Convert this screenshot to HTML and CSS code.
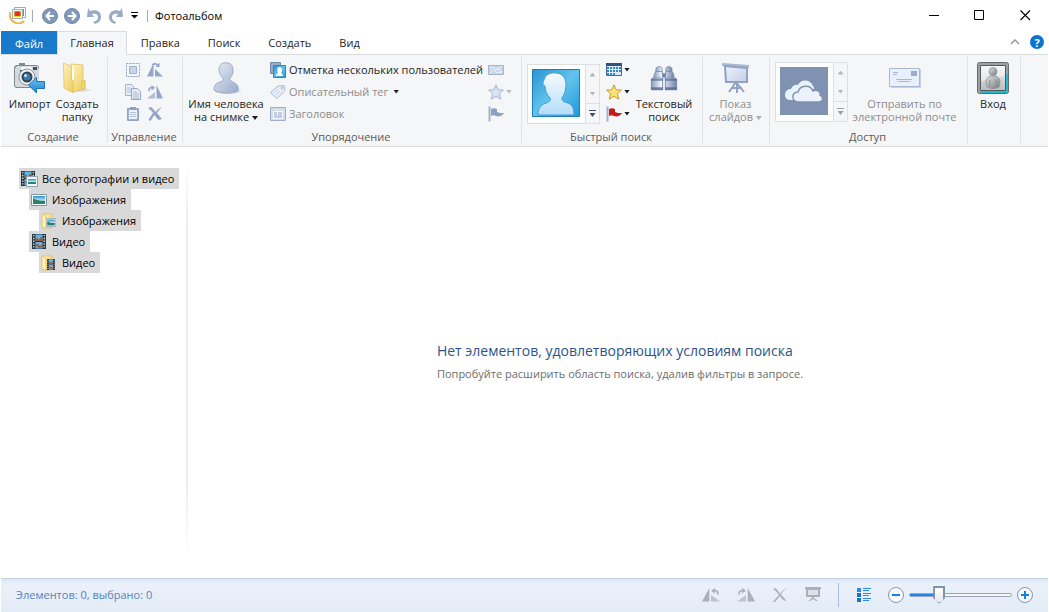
FILE: index.html
```html
<!DOCTYPE html>
<html lang="ru">
<head>
<meta charset="utf-8">
<title>Фотоальбом</title>
<link rel="stylesheet" href="styles.css">
</head>
<body>
<svg class="defs" aria-hidden="true">
  <defs>
    <linearGradient id="gSteel" x1="0" y1="0" x2="1" y2="1"><stop offset="0" stop-color="#e6ecf5"/><stop offset="1" stop-color="#98abc9"/></linearGradient>
    <linearGradient id="gPale" x1="0" y1="0" x2="1" y2="1"><stop offset="0" stop-color="#edf2fa"/><stop offset="1" stop-color="#c3d0e6"/></linearGradient>
    <linearGradient id="gFolder" x1="0" y1="0" x2="1" y2="1"><stop offset="0" stop-color="#fff3b8"/><stop offset="1" stop-color="#eccb5c"/></linearGradient>
    <linearGradient id="gSky" x1="0" y1="0" x2="1" y2="1"><stop offset="0" stop-color="#2a94d4"/><stop offset=".5" stop-color="#62c3ec"/><stop offset="1" stop-color="#1d98dc"/></linearGradient>
    <linearGradient id="gPerson" x1="0" y1="0" x2="0" y2="1"><stop offset="0" stop-color="#f6fbff"/><stop offset="1" stop-color="#b4dcf8"/></linearGradient>
    <linearGradient id="gArrow" x1="0" y1="0" x2="0" y2="1"><stop offset="0" stop-color="#6cc4f4"/><stop offset="1" stop-color="#1c83cf"/></linearGradient>
    <linearGradient id="gBino" x1="0" y1="0" x2="1" y2="0"><stop offset="0" stop-color="#8b9dbd"/><stop offset=".4" stop-color="#f4f7fc"/><stop offset="1" stop-color="#7085ac"/></linearGradient>
    <linearGradient id="gGray" x1="0" y1="0" x2="0" y2="1"><stop offset="0" stop-color="#f0f0f0"/><stop offset="1" stop-color="#b9bdc0"/></linearGradient>
    <linearGradient id="gBody" x1="0" y1="0" x2="1" y2="1"><stop offset="0" stop-color="#dfe1e3"/><stop offset="1" stop-color="#777d82"/></linearGradient>
    <linearGradient id="gPhoto" x1="0" y1="0" x2="0" y2="1"><stop offset="0" stop-color="#2d8fd0"/><stop offset=".55" stop-color="#bfe8ee"/><stop offset=".6" stop-color="#2d8a56"/><stop offset="1" stop-color="#2a75a8"/></linearGradient>
    <symbol id="person" viewBox="0 0 48 48"><path d="M6 46c0-6 2-10 8-12 4-1 5-3 4-5-3-3-5-7-5-12-3-1-2-4-1-6 1-5 6-8 12-7 6 0 10 5 10 11 0 5-1 10-4 14 0 4 3 4 6 5 5 2 6 6 6 12z"/></symbol>
    <symbol id="star" viewBox="0 0 16 16"><path d="M8 .8l2.1 4.900 5.300.4-4 3.600 1.300 5.500L8 12.300l-4.700 2.900L4.600 9.700.6 6.100l5.300-.4z" stroke-linejoin="round"/></symbol>
    <symbol id="flag" viewBox="0 0 16 16"><path class="pole" d="M.5.500h2v15h-2z"/><path d="M3 3c2-1 4-1 6 0v3c2 1 4 1 7 1-2 3-5 4-8 3-2-1-3-1-5 0z"/></symbol>
    <symbol id="turn" viewBox="0 0 16 16"><path d="M0 14.500L6.500 1v13.500z"/><path d="M8 8l8 6.500H8z" fill-opacity=".7"/><path d="M14 7.500C14.500 4.500 13 3.500 11 3.500" fill="none" stroke="currentColor" stroke-width="1.500"/><path d="M11.500 1v5.500L8 3.700z"/></symbol>
    <symbol id="turnUp" viewBox="0 0 16 16"><path d="M0 14.500L6.500 1v13.500zM8 7l8 7.500H8z"/><path d="M5 3c2-1.500 4-1.500 6 0" fill="none" stroke="currentColor" stroke-width="1.500"/><path d="M12.500.5V5H8.500z"/></symbol>
    <symbol id="cross" viewBox="0 0 16 16"><path d="M1 2l3-1c2 1 3 3 4.500 5C10 4 12 2 15 1c-2 2-4 4-5 6 2 2 3 4 5 6l-3 1c-2-1-3-3-4.500-5C6 11 5 13 3.500 15L1.500 14C3 11 4.500 9 6 7 4.500 5 3 3.500 1 2z"/></symbol>
    <symbol id="film" viewBox="0 0 16 16" preserveAspectRatio="none"><path fill="#27343d" d="M0 0h16v16H0z"/><path fill="#5fb8e6" d="M4 .5h8v7H4zM4 8.500h8v7H4z"/><path fill="#a4593f" d="M4 5l2-1 2 2 2-3 2 1v3.500H4zM4 12l3-2 2 3 3-2v3l-4 1z"/><path d="M2 1v14M14 1v14" stroke="#dfe7eb" stroke-width="1.500" stroke-dasharray="1.500 1.500"/></symbol>
    <symbol id="photo" viewBox="0 0 16 12" preserveAspectRatio="none"><path fill="#fff" stroke="#7f96a8" d="M.5.5h15v11H.5z"/><path fill="url(#gPhoto)" d="M2 2h12v8H2z"/><path fill="#357f4d" d="M2 5c3 0 4 2 12 2v1H2z"/></symbol>
    <symbol id="folder16" viewBox="0 0 16 16"><path fill="url(#gFolder)" stroke="#d9bd6b" stroke-width=".7" d="M2 1h9v14H2z"/><path fill="#fff0af" stroke="#d9bd6b" stroke-width=".7" d="M1 1l4 2v12.500L1 14z"/></symbol>
  </defs>
</svg>

<header class="titlebar">
  <svg class="app-icon" width="17" height="17" viewBox="0 0 17 17"><path d="M1 5c-1 5 1 9 6 11 3 1 6 0 8-2" fill="none" stroke="#f4b545" stroke-width="2"/><path fill="#fff" stroke="#8fb0cb" d="M5.500.5h11v10h-11z"/><path fill="#4c9ed6" d="M12 2h3v7h-3z"/><path fill="#fff" stroke="#8fb0cb" d="M3.500 2.500h10v9h-10z"/><path fill="#f5852a" d="M5 4h7v6H5z"/><circle cx="8.500" cy="7" r="2.500" fill="#d9341a"/><path d="M5 9h7v1H5z" fill="#ffd02e"/></svg>
  <span class="bar"></span>
  <div class="quick">
    <button aria-label="Назад"><svg width="16" height="16" viewBox="0 0 16 16"><circle cx="8" cy="8" r="7.500" fill="#8398bd" stroke="#71869f"/><path d="M12 8H5M8 4L4.500 8 8 12" fill="none" stroke="#fff" stroke-width="2"/></svg></button>
    <button aria-label="Вперёд"><svg width="16" height="16" viewBox="0 0 16 16"><circle cx="8" cy="8" r="7.500" fill="#8398bd" stroke="#71869f"/><path d="M4 8h7M8 4l3.500 4L8 12" fill="none" stroke="#fff" stroke-width="2"/></svg></button>
    <button aria-label="Отменить"><svg width="16" height="16" viewBox="0 0 16 16"><path fill="#9aabc8" d="M2 0l2 3c6-2 11 0 11 6 0 4-3 6-6 7l-2-2c3-1 5-2 5-5 0-3-3-4-6-3l2 3H1z"/></svg></button>
    <button aria-label="Повторить"><svg width="16" height="16" viewBox="0 0 16 16"><path fill="#9aabc8" d="M14 0l-2 3C6 1 1 4 1 9c0 4 3 6 6 7l1-2c-2-1-4-2-4-5s3-4 6-3L8 9h7z"/></svg></button>
    <button class="narrow" aria-label="Настройка панели"><svg width="7" height="7" viewBox="0 0 7 7"><path d="M0 0h7v1H0zM0 3h7L3.500 6.500z"/></svg></button>
  </div>
  <span class="bar"></span>
  <h1 class="title">Фотоальбом</h1>
  <div class="window-buttons">
    <button aria-label="Свернуть"><svg width="11" height="11" viewBox="0 0 11 11"><path d="M1 5h10v1H1z"/></svg></button>
    <button aria-label="Развернуть"><svg width="11" height="11" viewBox="0 0 11 11"><path d="M.5.5h9v9h-9z" fill="none" stroke="#000"/></svg></button>
    <button aria-label="Закрыть"><svg width="11" height="11" viewBox="0 0 11 11"><path d="M.5.5l9.500 9.500M10 .5L.5 10" stroke="#000" stroke-width="1.100"/></svg></button>
  </div>
</header>

<nav class="tabs">
  <button class="tab file">Файл</button>
  <button class="tab active">Главная</button>
  <button class="tab">Правка</button>
  <button class="tab">Поиск</button>
  <button class="tab">Создать</button>
  <button class="tab">Вид</button>
  <div class="tab-tools">
    <button aria-label="Свернуть ленту"><svg width="10" height="6" viewBox="0 0 10 6"><path d="M1 5l4-4 4 4" fill="none" stroke="#999" stroke-width="1.500"/></svg></button>
    <button class="help" aria-label="Справка">?</button>
  </div>
</nav>

<section class="ribbon">
  <div class="group create">
    <div class="tools">
      <button class="big"><svg width="34" height="32" viewBox="0 0 34 32"><path fill="#7e8990" d="M1 5l2-2h3V1h6v2h12l2 2v19l-2 2H3l-2-2z"/><path fill="#d5dade" d="M2 6l2-2h20l2 3v17l-2 1H4l-2-1z"/><path fill="#f6f8f9" d="M8 5h11v4H8z"/><path fill="#43505a" d="M20 5h4v3h-4zM7 8h2v2H7z"/><circle cx="14" cy="15" r="8" fill="#eef1f3" stroke="#89949c"/><circle cx="14" cy="15" r="5.500" fill="#3a434b"/><circle cx="14" cy="15" r="3.500" fill="#337db5"/><circle cx="12.500" cy="13.500" r="1.500" fill="#cce7f8"/><path fill="url(#gArrow)" stroke="#1f73b3" stroke-linejoin="round" d="M15.500 23l8-7.500v4H31.500v7h-8V31z"/></svg><span>Импорт</span></button>
      <button class="big"><svg width="32" height="32" viewBox="0 0 32 32"><path d="M22 26l9 2-8 2H12z" fill="#dfe0e2"/><path fill="url(#gFolder)" stroke="#dcc173" stroke-width=".8" d="M10 2l12 1v15l2 1v8l-12 3z"/><path fill="#fff" d="M10 4l3 1v19l-2 4z"/><path fill="url(#gFolder)" stroke="#dcc173" stroke-width=".8" d="M2.500 1l8 3.500V17l2 2v12L3 26z"/><path fill="#f3d463" stroke="#dcc173" stroke-width=".8" d="M20.500 18.500h3.500v8h-3.500z"/></svg><span>Создать<br>папку</span></button>
    </div>
    <h2>Создание</h2>
  </div>

  <div class="group manage">
    <div class="tools grid">
      <button aria-label="Выделить все"><svg width="16" height="16" viewBox="0 0 16 16"><path fill="#f5f8fc" stroke="#8ea3c6" stroke-dasharray="2 1" d="M1.500 1.500h13v13h-13z"/><path fill="#c9d5e8" stroke="#9eb1cf" d="M4.500 4.500h7v7h-7z"/></svg></button>
      <button aria-label="Повернуть влево" class="steel"><svg width="16" height="16"><use href="#turnUp"/></svg></button>
      <button aria-label="Копировать"><svg width="16" height="16" viewBox="0 0 16 16"><path fill="#e9eff8" stroke="#a0b2d0" d="M.5.5h6l2 2v9h-8z"/><path d="M2 4h4M2 6h4M2 8h4" stroke="#b4c3db"/><path fill="#e9eff8" stroke="#92a6c8" d="M6.500 4.500h6l3 3v8h-9z"/><path d="M8 8h4M8 10h6M8 12h6M8 14h6" stroke="#a8b9d4"/></svg></button>
      <button aria-label="Повернуть вправо" class="steel flip"><svg width="16" height="16"><use href="#turn"/></svg></button>
      <button aria-label="Вставить"><svg width="14" height="16" viewBox="0 0 14 16"><path fill="#9fb1cf" stroke="#8ea3c6" d="M1.500 2.500h11v12h-11z"/><path fill="#edf2f9" d="M3 4h8v9H3z"/><path d="M4 6.500h6M4 8.500h6M4 10.500h6" stroke="#b6c4da"/><path fill="#8ca1c5" d="M4 1h6v3H4z"/></svg></button>
      <button aria-label="Удалить" class="steel"><svg width="16" height="16"><use href="#cross"/></svg></button>
    </div>
    <h2>Управление</h2>
  </div>

  <div class="group organize">
    <div class="tools">
      <button class="big wide"><svg width="32" height="32" viewBox="0 0 32 32"><ellipse cx="18" cy="29" rx="13" ry="3" fill="#dcdfe4"/><path fill="url(#gSteel)" stroke="#9dadc7" d="M4 28c0-5 2-7 6-8 3-1 4-3 2-5-2-2-3-5-3-8 1-5 4-7 8-6 5 0 6 4 6 8 0 3-1 5-3 7-1 2 1 3 3 4 4 2 6 4 5 9-5 3-20 3-24-1z"/></svg><span>Имя человека<br>на снимке <i class="caret"></i></span></button>
      <div class="rows">
        <button class="line"><svg width="16" height="16" viewBox="0 0 16 16"><path fill="#9badca" stroke="#748baf" d="M.5.5h10v11H.5z"/><path fill="url(#gSky)" stroke="#168bd0" d="M3.500 3.500h12v12h-12z"/><path fill="#fff" d="M6 14c0-2 1-2 2-3-1-3-1-6 1.500-6s3 3 1.500 6c1 1 2 1 2 3z"/></svg>Отметка нескольких пользователей</button>
        <button class="line off"><svg width="16" height="16" viewBox="0 0 16 16"><path fill="#e9eff8" stroke="#a9b9d3" d="M.5 8.500L8 2l6-.5 1 5L7 14.500z"/><circle cx="12" cy="4" r="1" fill="#fff" stroke="#a9b9d3"/><path d="M4 9l4-4M6 11l4-4" stroke="#bdcae0"/></svg>Описательный тег<i class="caret"></i></button>
        <button class="line off"><svg width="16" height="14" viewBox="0 0 16 14"><path fill="#d4ddec" stroke="#9dafcd" d="M.5.5h15v13H.5z"/><path fill="#f5f8fc" d="M3 4h10v8H3z"/><path d="M4 6h3M4 8h3M8 6h4M8 8h4M4 10h8" stroke="#8ea3c6"/></svg>Заголовок</button>
      </div>
      <div class="rows marks">
        <button aria-label="Геотег"><svg width="16" height="10" viewBox="0 0 16 10"><path fill="#c9d5e8" stroke="#a4b5d1" d="M.5.5h15v9H.5z"/><path d="M2 3l3-1 3 3 5-3M2 8l4-3 3 3 5-1M9 3l4 4" fill="none" stroke="#edf2f9"/></svg></button>
        <button class="pale" aria-label="Оценка"><svg width="16" height="16"><use href="#star"/></svg><i class="caret"></i></button>
        <button class="paleflag" aria-label="Флаг"><svg width="16" height="16"><use href="#flag"/></svg></button>
      </div>
    </div>
    <h2>Упорядочение</h2>
  </div>

  <div class="group search">
    <div class="tools">
      <div class="gallery low">
        <button class="tile" aria-label="Человек"><svg width="48" height="48" viewBox="0 0 48 48"><path fill="url(#gSky)" stroke="#1d7fb8" d="M.5.5h47v47H.5z"/><use href="#person" fill="url(#gPerson)" stroke="#3d9bd0"/></svg></button>
        <div class="scroller"><button aria-label="Вверх"><i class="up"></i></button><button aria-label="Вниз"><i class="caret"></i></button><button class="more" aria-label="Ещё"><i class="caret"></i></button></div>
      </div>
      <div class="rows filters">
        <button aria-label="Дата"><svg width="16" height="14" viewBox="0 0 16 14"><path fill="#dbeaf6" stroke="#47698f" d="M.5.5h15v12H.5z"/><path fill="#285580" d="M0 0h16v3H0z"/><path d="M1 5h14M1 8h14M1 11h8" stroke="#3688c7" stroke-width="2" stroke-dasharray="2 1"/></svg><i class="caret"></i></button>
        <button class="gold" aria-label="Оценка"><svg width="16" height="16"><use href="#star"/></svg><i class="caret"></i></button>
        <button class="red" aria-label="Отмечено"><svg width="16" height="16"><use href="#flag"/></svg><i class="caret"></i></button>
      </div>
      <button class="big"><svg width="28" height="30" viewBox="0 0 30 32"><g fill="url(#gBino)" stroke="#7b8db0"><path d="M6.500 5.500l2-1.500h3l1.500 2v5h-7zM17 6l1.500-2h3l2 1.500V11H17z"/><path d="M4.500 12l2-3h6l1.500 3v5h-10zM16 12l1.500-3h6l2 3v5H16z"/><path d="M1.500 18l1-2h10l1 2v10h-12zM16.500 18l1-2h10l1 2v10h-12z"/></g><path d="M13 11h4v4h-4z" fill="#7185aa"/><path d="M1 17h13v2H1zM16 17h13v2H16zM1 26h13v3H1zM16 26h13v3H16z" fill="#465d8d" fill-opacity=".65"/></svg><span>Текстовый<br>поиск</span></button>
    </div>
    <h2>Быстрый поиск</h2>
  </div>

  <div class="group show">
    <div class="tools">
      <button class="big off"><svg width="32" height="32" viewBox="0 0 32 32"><path d="M16 20L9 30M16 20l8 10M17 20v11M12 26h10" stroke="#8fa2c1" stroke-width="2"/><path fill="#a9b8d2" d="M2 1l27 2v3L2 4z"/><path fill="url(#gPale)" stroke="#8fa3c4" stroke-width="2" d="M5 4l22 2v14L6 20z"/></svg><span>Показ<br>слайдов <i class="caret"></i></span></button>
    </div>
    <h2></h2>
  </div>

  <div class="group share">
    <div class="tools">
      <div class="gallery">
        <button class="tile" aria-label="Облако"><svg width="48" height="48" viewBox="0 0 48 48"><path fill="#8092b1" d="M0 0h48v48H0z"/><path fill="#e9f1fb" d="M11 33c-4 0-6-2-6-5 0-4 3-6 6-6 1-3 4-5 7-4 3-6 12-6 15 1 1 1 1 2 1 3H20v11z"/><path fill="#ecf3fc" stroke="#8092b1" stroke-width="1.500" d="M19 35c-8 0-8-10-1-10 2-7 12-8 15-1 4-2 8 1 7 4 4 2 3 7-1 7z"/></svg></button>
        <div class="scroller dim"><button aria-label="Вверх"><i class="up"></i></button><button aria-label="Вниз"><i class="caret"></i></button><button class="more" aria-label="Ещё"><i class="caret"></i></button></div>
      </div>
      <button class="big mail off"><svg width="32" height="32" viewBox="0 0 32 32"><path fill="#c7d1e3" d="M2 7h30v19H2z"/><path fill="#e9f0fb" stroke="#a8b9d6" d="M.5 6.500h30v18H.5z"/><path fill="#9bacce" d="M22 9h6v5h-6z"/><path d="M4 10.500h5M4 12.500h4M7 17.500h16M9 19.500h12" stroke="#a8b7d1"/></svg><span>Отправить по<br>электронной почте</span></button>
    </div>
    <h2>Доступ</h2>
  </div>

  <div class="group signin">
    <div class="tools">
      <button class="big"><svg width="32" height="32" viewBox="0 0 32 32"><rect x=".5" y=".5" width="31" height="31" rx="2" fill="#9da1a4" stroke="#66696c"/><path d="M4 30h26V12" fill="none" stroke="#22b9cb" stroke-width="2"/><path fill="url(#gGray)" stroke="#55595c" d="M3.500 3.500h25v25h-25z"/><path d="M4 4h24v10L4 19z" fill="#fff" fill-opacity=".45"/><path fill="url(#gBody)" stroke="#85898c" stroke-width=".7" d="M10 25c-2-5-1-9 3-11h6c4 2 5 6 3 11-4 2-8 2-12 0z"/><circle cx="16" cy="9.500" r="4" fill="url(#gBody)" stroke="#85898c" stroke-width=".7"/><path d="M12.500 18v7M19.500 18v7" stroke="#7f8487" stroke-width=".7"/></svg><span>Вход</span></button>
    </div>
    <h2></h2>
  </div>
</section>

<main class="workspace">
  <aside class="sidebar">
    <ul class="tree">
      <li><button><svg width="18" height="16" viewBox="0 0 18 16"><use href="#film" width="14" height="15"/><path fill="#f4f7f8" stroke="#8fa2b0" d="M5.500 5.500h11v10h-11z"/><path fill="url(#gPhoto)" d="M7 8h8v5H7z"/></svg>Все фотографии и видео</button>
        <ul>
          <li><button><svg width="16" height="12"><use href="#photo"/></svg>Изображения</button>
            <ul><li><button><svg width="16" height="16" viewBox="0 0 16 16"><use href="#folder16"/><use href="#photo" x="5" y="5" width="10" height="9"/></svg>Изображения</button></li></ul>
          </li>
          <li><button><svg width="16" height="16" viewBox="0 0 16 16"><use href="#film" x="1" y="0" width="14" height="15"/></svg>Видео</button>
            <ul><li><button><svg width="16" height="16" viewBox="0 0 16 16"><use href="#folder16"/><use href="#film" x="6" y="4" width="8" height="11"/></svg>Видео</button></li></ul>
          </li>
        </ul>
      </li>
    </ul>
  </aside>
  <section class="results">
    <div>
      <h2>Нет элементов, удовлетворяющих условиям поиска</h2>
      <p>Попробуйте расширить область поиска, удалив фильтры в запросе.</p>
    </div>
  </section>
</main>

<footer class="status">
  <p>Элементов: 0, выбрано: 0</p>
  <div class="status-tools">
    <button aria-label="Повернуть влево"><svg width="18" height="16" viewBox="0 0 16 16" preserveAspectRatio="none"><use href="#turn"/></svg></button>
    <button class="flip" aria-label="Повернуть вправо"><svg width="18" height="16" viewBox="0 0 16 16" preserveAspectRatio="none"><use href="#turn"/></svg></button>
    <button aria-label="Удалить"><svg width="16" height="16" viewBox="0 0 16 16"><path d="M1 2l2-1c2 1 4 4 5 6 2-3 4-5 7-6-3 2-5 4-6 7 2 2 4 3 5 6h-1c-2-1-4-3-5-5-2 2-3 4-5 6H1c2-3 4-5 6-7-2-3-4-5-6-6z"/></svg></button>
    <button aria-label="Показ слайдов"><svg width="16" height="15" viewBox="0 0 16 15"><path d="M0 0h16v2h-1v8H9v1l4 3h-2l-3-2-3 2H3l4-3v-1H1V2H0z"/><path fill="#dde1e7" d="M3 3h10v5H3z"/></svg></button>
  </div>
  <div class="view-tools">
    <button aria-label="Сведения"><svg width="14" height="14" viewBox="0 0 14 14"><path fill="#2e8ae8" d="M0 0h4v4H0z"/><path fill="#1673d4" d="M0 5h4v4H0zM0 10h4v4H0z"/><path d="M6 .5h8M6 2.500h6M6 5.500h8M6 7.500h6M6 10.500h8M6 12.500h6" stroke="#2e8ae4"/></svg></button>
    <div class="zoom">
      <button aria-label="Уменьшить"><svg width="16" height="16" viewBox="0 0 16 16"><circle cx="8" cy="8" r="7.500" fill="#f8fbff" stroke="#8496b0"/><path fill="#1c7ee0" d="M4 7h8v2H4z"/></svg></button>
      <input type="range" min="0" max="100" value="26" aria-label="Масштаб">
      <button aria-label="Увеличить"><svg width="16" height="16" viewBox="0 0 16 16"><circle cx="8" cy="8" r="7.500" fill="#f8fbff" stroke="#8496b0"/><path fill="#1c7ee0" d="M4 7h3V4h2v3h3v2H9v3H7V9H4z"/></svg></button>
    </div>
  </div>
</footer>
</body>
</html>
```

FILE: styles.css
```css
* { box-sizing: border-box; }

body {
  margin: 0;
  padding: 0 1px;
  min-height: 100vh;
  display: flex;
  flex-direction: column;
  background: #fff;
  color: #1e1e1e;
  font: 11px/13px "Open Sans", "Noto Sans", sans-serif;
}

button {
  display: flex;
  align-items: center;
  justify-content: center;
  margin: 0;
  padding: 0;
  border: 0;
  background: none;
  color: inherit;
  font: inherit;
  white-space: nowrap;
}

h1, h2, p, ul { margin: 0; padding: 0; font: inherit; list-style: none; }
svg { display: block; flex: none; }
.defs { position: absolute; width: 0; height: 0; }

.caret, .up {
  display: inline-block;
  flex: none;
  width: 6px;
  height: 4px;
  background: currentColor;
  clip-path: polygon(0 0, 100% 0, 50% 100%);
}
.caret { vertical-align: 1px; }
.up { clip-path: polygon(0 100%, 100% 100%, 50% 0); }

/* Title bar */
.titlebar { display: flex; align-items: center; height: 31px; padding-left: 8px; color: #000; }
.bar { width: 1px; height: 12px; margin: 0 6px; background: #aaa; }
.quick { display: flex; }
.quick button { width: 22px; height: 22px; }
.quick .narrow { width: 14px; }
.window-buttons { display: flex; margin-left: auto; }
.titlebar .title { padding-left: 1px; }
.window-buttons button { width: 46px; height: 31px; }

/* Tabs */
.tabs { display: flex; height: 24px; border-bottom: 1px solid #d9dbdd; }
.tab { height: 24px; padding: 0 13px 2px; border: 1px solid transparent; border-bottom: 0; }
.file { height: 23px; padding-bottom: 0; background: #1979ca; color: #fff; }
.active { padding: 0 12px 2px; border-color: #d9dbdd; background: #f5f6f7; }
.tab-tools { display: flex; gap: 10px; margin-left: auto; padding-right: 4px; }
.tab-tools button { height: 22px; }
.tab-tools .help { width: 14px; height: 14px; margin-top: 4px; border-radius: 50%; background: #0b74d1; color: #fff; font-weight: 700; }

/* Ribbon */
.ribbon { display: flex; min-height: 92px; border-bottom: 1px solid #d9dbdd; background: #f5f6f7; }
.group {
  display: flex;
  flex-direction: column;
  flex: none;
  background: linear-gradient(#e0e2e4, #e0e2e4) right 2px / 1px 86px no-repeat;
}
.group h2 { padding: 1px 3px 0 0; color: #5a5a5a; line-height: 16px; text-align: center; }
.tools { display: flex; height: 73px; padding: 4px 7px 0 5px; }
.create { width: 107px; }
.manage { width: 75px; }
.organize { width: 339px; }
.search { width: 181px; }
.show { width: 67px; }
.share { width: 198px; }
.signin { width: 53px; }
.signin .tools { padding-right: 8px; }

.big { flex: 1; flex-direction: column; justify-content: flex-start; gap: 3px; padding-top: 3px; min-width: 0; }
.big svg { height: 32px; }
.wide { flex: 0 0 76px; }
.off { color: #8d8d8d; }
.off .caret { color: #b0b0b0; }
.rows { display: flex; flex-direction: column; margin-left: 6px; }
.rows button { height: 22px; justify-content: flex-start; gap: 3px; padding-bottom: 1px; }
.rows .off .caret { margin-left: 2px; color: #222; }
.marks { margin-left: auto; padding-right: 3px; }
.marks button { gap: 2px; }
.marks .caret { color: #b5b8bc; }
.filters { width: 26px; }
.filters button { gap: 2px; }
.grid { display: grid; grid-template: repeat(3, 22px) / repeat(2, 22px); padding: 4px 14px 0; }

.steel { color: #94a7c7; }
.steel svg, .status svg { fill: currentColor; }
.flip { transform: scaleX(-1); }
.pale use { fill: #d9e4f3; stroke: #a4b6d3; }
.gold use { fill: #fce27b; stroke: #c99b25; }
.paleflag use { fill: #8ca1c4; }
.red use { fill: #c61a1a; }
.pole { fill: #a6b2c4; }

.gallery { display: flex; flex: none; width: 73px; height: 60px; margin-top: 3px; border: 1px solid #dddfe2; background: #fcfdfd; }
.low { margin-top: 5px; }
.gallery .tile { flex: 1; padding: 0 2px 2px 0; }
.scroller { display: flex; flex-direction: column; width: 14px; border-left: 1px solid #dddfe2; background: #f5f6f7; color: #b3b6ba; }
.scroller button { flex: 1; }
.scroller .more { flex-direction: column; gap: 2px; border-top: 1px solid #dddfe2; color: #3f4e66; }
.scroller .more::before { content: ""; width: 7px; height: 1px; background: currentColor; }
.dim .more { color: #9a9fa8; }

/* Workspace */
.workspace { display: flex; flex: 1; }
.sidebar {
  flex: 0 0 187px;
  padding: 21px 0 0 18px;
  background: linear-gradient(#fff, #ebecee 15%, #ebecee 80%, #fff) right 15px / 2px 395px no-repeat;
}
.tree button { height: 21px; padding: 0 5px 0 2px; gap: 5px; background: #d9d9d9; color: #000; }
.tree > li > button { gap: 3px; }
.tree ul { padding-left: 10px; }
.results { display: flex; flex: 1; align-items: center; justify-content: center; padding-bottom: 4px; color: #6d6d6d; }
.results > div { padding-left: 4px; }
.results h2 { margin-bottom: 6px; color: #2c5488; font-size: 14px; line-height: 20px; }

/* Status bar */
.status {
  display: flex;
  align-items: center;
  height: 34px;
  padding: 0 15px 2px;
  border-top: 1px solid #c3d1e4;
  background: linear-gradient(#dce6f3, #eaf1fa 5px, #e3ebf6);
  color: #5a82b8;
}
.status-tools { display: flex; gap: 17px; margin-left: auto; padding-right: 17px; color: #a9b0ba; }
.view-tools { display: flex; align-items: center; gap: 17px; height: 24px; padding-left: 18px; border-left: 1px solid #a9bcd6; }
.zoom { display: flex; align-items: center; gap: 5px; }

input[type="range"] { width: 103px; height: 18px; margin: 0; appearance: none; background: none; }
input[type="range"]::-webkit-slider-runnable-track {
  height: 4px;
  border: 1px solid #9ba6bd;
  border-radius: 2px;
  background: linear-gradient(90deg, #1c86ee 30%, #f4f8fd 30%);
}
input[type="range"]::-webkit-slider-thumb {
  width: 12px;
  height: 18px;
  margin-top: -8px;
  appearance: none;
  padding: 2px;
  background: linear-gradient(#fff, #e3e8ef) content-box, #8393a9;
  clip-path: polygon(0 0, 100% 0, 100% 70%, 50% 100%, 0 70%);
}
```
